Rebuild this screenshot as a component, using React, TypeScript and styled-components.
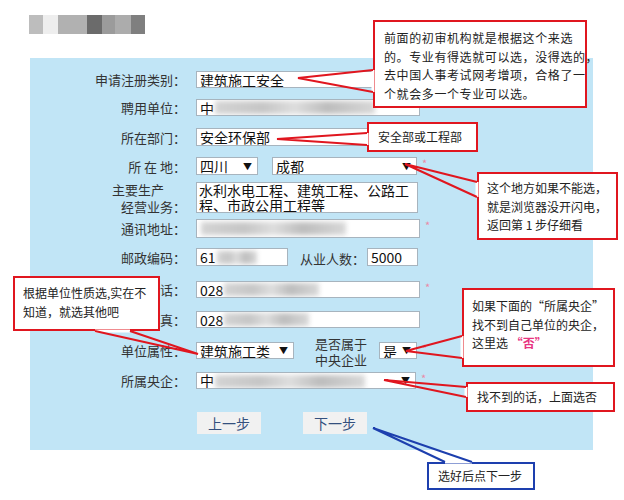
import styled, { createGlobalStyle } from "styled-components";

const GlobalStyle = createGlobalStyle`
  html, body {
    margin: 0;
    padding: 0;
    background: #fff;
  }
  body {
    font-family: "Noto Sans CJK SC", "Noto Sans", sans-serif;
  }
`;

const Page = styled.div`
  position: relative;
  width: 624px;
  height: 500px;
  overflow: hidden;
`;

const Header = styled.div`
  height: 58px;
  padding-left: 29px;
  display: flex;
  align-items: flex-start;
`;

const Mosaic = styled.div`
  display: flex;
  margin-top: 15px;
  height: 19px;
  filter: blur(0.5px);
`;

const Tile = styled.span<{ $w: number; $c: string }>`
  width: ${(p) => p.$w}px;
  background: ${(p) => p.$c};
`;

const Panel = styled.div`
  margin-left: 30px;
  width: 563px;
  height: 392px;
  box-sizing: border-box;
  background: #c1e5f6;
  padding-top: 13px;
`;

const Row = styled.div<{ $gap?: number; $h?: number }>`
  display: flex;
  align-items: center;
  margin-top: ${(p) => p.$gap ?? 0}px;
  height: ${(p) => p.$h ?? 17}px;
`;

const Label = styled.div`
  width: 156px;
  margin-right: 10px;
  flex-shrink: 0;
  text-align: right;
  font-size: 13px;
  line-height: 17px;
  color: #333;
  white-space: nowrap;
`;

const LabelLine = styled.span<{ $pr?: number }>`
  display: block;
  padding-right: ${(p) => p.$pr ?? 0}px;
`;

const SideLabel = styled.div<{ $ml: number; $mr: number }>`
  margin-left: ${(p) => p.$ml}px;
  margin-right: ${(p) => p.$mr}px;
  margin-top: 3px;
  font-size: 13px;
  line-height: 16px;
  color: #333;
  white-space: nowrap;
`;

const Field = styled.div<{ $w: number; $h?: number; $wrap?: boolean }>`
  width: ${(p) => p.$w}px;
  height: ${(p) => p.$h ?? 17}px;
  box-sizing: border-box;
  flex-shrink: 0;
  background: #fff;
  border: 1px solid #a7b4be;
  display: flex;
  align-items: ${(p) => (p.$wrap ? "flex-start" : "center")};
  padding: ${(p) => (p.$wrap ? "0 2px" : "0 3px")};
  font-size: 14px;
  line-height: ${(p) => (p.$wrap ? "14.5px" : "1")};
  color: #111;
  overflow: hidden;
  white-space: ${(p) => (p.$wrap ? "normal" : "nowrap")};
`;

const SelectBox = styled(Field)`
  justify-content: space-between;
`;

const Arrow = styled.span`
  font-size: 9px;
  color: #111;
  margin-right: 2px;
`;

const Smudge = styled.span<{ $w: number }>`
  display: inline-block;
  vertical-align: middle;
  width: ${(p) => p.$w}px;
  height: 13px;
  margin-left: 1px;
  background: linear-gradient(
    90deg,
    #d4d4d4,
    #c6c6c6 30%,
    #dedede 50%,
    #bdbdbd 70%,
    #d8d8d8
  );
  filter: blur(2.5px);
`;

const Star = styled.span<{ $ml?: number }>`
  margin-left: ${(p) => p.$ml ?? 5}px;
  align-self: flex-start;
  font-size: 11px;
  line-height: 12px;
  color: #e98aa8;
`;

const Buttons = styled.div`
  display: flex;
  margin-top: 23px;
  padding-left: 167px;
  gap: 42px;
`;

const StepButton = styled.button`
  width: 64px;
  height: 22px;
  border: none;
  background: #f1f1f1;
  font-family: "Noto Sans CJK SC", sans-serif;
  font-size: 14px;
  color: #34507e;
  padding: 0;
`;

const Callout = styled.div<{
  $x: number;
  $y: number;
  $w: number;
  $h: number;
  $blue?: boolean;
  $pad?: string;
}>`
  position: absolute;
  left: ${(p) => p.$x}px;
  top: ${(p) => p.$y}px;
  width: ${(p) => p.$w}px;
  height: ${(p) => p.$h}px;
  box-sizing: border-box;
  border: 2px solid ${(p) => (p.$blue ? "#1d3fae" : "#e0161f")};
  background: #fff;
  padding: ${(p) => p.$pad ?? "6px 0 0 9px"};
  font-size: 12px;
  line-height: 18.5px;
  color: #222;
  white-space: nowrap;
`;

const Wide = styled.span`
  letter-spacing: 0.6px;
`;

const Pink = styled.b`
  color: #e8357f;
`;

const Pointers = styled.svg`
  position: absolute;
  left: 0;
  top: 0;
  pointer-events: none;
`;

type Pt = [number, number];
const RED = "#e0161f";
const BLUE = "#1d3fae";

const pointers: { c: string; a: Pt; b: Pt; t: Pt }[] = [
  { c: RED, a: [373, 70], b: [373, 92], t: [298, 78] },
  { c: RED, a: [367, 133], b: [367, 145], t: [277, 139] },
  { c: RED, a: [477, 182], b: [477, 197], t: [405, 164] },
  { c: RED, a: [95, 331], b: [130, 331], t: [198, 354] },
  { c: RED, a: [462, 336], b: [462, 358], t: [406, 351] },
  { c: RED, a: [466, 387], b: [466, 397], t: [384, 380] },
  { c: BLUE, a: [445, 462], b: [472, 462], t: [373, 428] },
];

const tiles: [number, string][] = [
  [14, "#bdbdbd"],
  [15, "#eeeeee"],
  [29, "#b1b1b1"],
  [15, "#6b6b6b"],
  [13, "#9b9b9b"],
  [16, "#acacac"],
  [14, "#7f7f7f"],
];

export default function App() {
  return (
    <Page>
      <GlobalStyle />
      <Header>
        <Mosaic>
          {tiles.map(([w, c], i) => (
            <Tile key={i} $w={w} $c={c} />
          ))}
        </Mosaic>
      </Header>

      <Panel>
        <Row>
          <Label>申请注册类别：</Label>
          <Field $w={224}>建筑施工安全</Field>
        </Row>
        <Row $gap={11}>
          <Label>聘用单位：</Label>
          <Field $w={224}>
            中<Smudge $w={160} />
          </Field>
        </Row>
        <Row $gap={12} $h={18}>
          <Label>所在部门：</Label>
          <Field $w={224} $h={18}>
            安全环保部
          </Field>
        </Row>
        <Row $gap={11} $h={18}>
          <Label>所 在 地：</Label>
          <SelectBox $w={62} $h={18}>
            四川<Arrow>▼</Arrow>
          </SelectBox>
          <SelectBox $w={145} $h={18} style={{ marginLeft: 14 }}>
            成都<Arrow>▼</Arrow>
          </SelectBox>
          <Star>*</Star>
        </Row>
        <Row $gap={7} $h={31}>
          <Label>
            <LabelLine $pr={22}>主要生产</LabelLine>
            <LabelLine>经营业务：</LabelLine>
          </Label>
          <Field $w={222} $h={31} $wrap>
            水利水电工程、建筑工程、公路工程、市政公用工程等
          </Field>
        </Row>
        <Row $gap={6} $h={19}>
          <Label>通讯地址：</Label>
          <Field $w={224} $h={19}>
            <Smudge $w={145} />
          </Field>
          <Star>*</Star>
        </Row>
        <Row $gap={10} $h={18}>
          <Label>邮政编码：</Label>
          <Field $w={92} $h={18}>
            61<Smudge $w={40} />
          </Field>
          <SideLabel $ml={12} $mr={2}>
            从业人数：
          </SideLabel>
          <Field $w={51} $h={18}>
            5000
          </Field>
        </Row>
        <Row $gap={15}>
          <Label>电话：</Label>
          <Field $w={224}>
            028<Smudge $w={95} />
          </Field>
          <Star>*</Star>
        </Row>
        <Row $gap={13}>
          <Label>传真：</Label>
          <Field $w={224}>
            028<Smudge $w={85} />
          </Field>
        </Row>
        <Row $gap={14}>
          <Label>单位属性：</Label>
          <SelectBox $w={98}>
            建筑施工类<Arrow>▼</Arrow>
          </SelectBox>
          <SideLabel $ml={21} $mr={12}>
            <LabelLine>是否属于</LabelLine>
            <LabelLine>中央企业</LabelLine>
          </SideLabel>
          <SelectBox $w={38}>
            是<Arrow>▼</Arrow>
          </SelectBox>
          <Star>*</Star>
        </Row>
        <Row $gap={13}>
          <Label>所属央企：</Label>
          <SelectBox $w={220}>
            <span>
              中<Smudge $w={150} />
            </span>
            <Arrow>▼</Arrow>
          </SelectBox>
          <Star>*</Star>
        </Row>
        <Buttons>
          <StepButton>上一步</StepButton>
          <StepButton>下一步</StepButton>
        </Buttons>
      </Panel>

      <Callout $x={373} $y={20} $w={214} $h={88} $pad="7px 0 0 9px">
        <Wide>前面的初审机构就是根据这个来选</Wide>
        <br />
        <Wide>的。专业有得选就可以选，没得选的，</Wide>
        <br />
        <Wide>去中国人事考试网考增项，合格了一</Wide>
        <br />
        <Wide>个就会多一个专业可以选。</Wide>
      </Callout>
      <Callout $x={367} $y={122} $w={111} $h={30} $pad="4px 0 0 9px">
        安全部或工程部
      </Callout>
      <Callout $x={477} $y={172} $w={141} $h={68} $pad="5px 0 0 8px">
        这个地方如果不能选，
        <br />
        就是浏览器没开闪电，
        <br />
        返回第 1 步仔细看
      </Callout>
      <Callout $x={13} $y={276} $w={147} $h={55} $pad="6px 0 0 8px">
        根据单位性质选,实在不
        <br />
        知道，就选其他吧
      </Callout>
      <Callout $x={462} $y={288} $w={153} $h={79} $pad="7px 0 0 8px">
        如果下面的“所属央企”
        <br />
        找不到自己单位的央企，
        <br />
        这里选 <Pink>“否”</Pink>
      </Callout>
      <Callout $x={466} $y={382} $w={149} $h={30} $pad="4px 0 0 9px">
        找不到的话，上面选否
      </Callout>
      <Callout $x={427} $y={462} $w={108} $h={28} $blue $pad="3px 0 0 9px">
        选好后点下一步
      </Callout>

      <Pointers width={624} height={500} viewBox="0 0 624 500">
        {pointers.map((p, i) => (
          <g key={i}>
            <line
              x1={p.a[0]}
              y1={p.a[1]}
              x2={p.b[0]}
              y2={p.b[1]}
              stroke="#fff"
              strokeWidth={3}
            />
            <polyline
              points={`${p.a.join(",")} ${p.t.join(",")} ${p.b.join(",")}`}
              fill="none"
              stroke={p.c}
              strokeWidth={2}
              strokeLinejoin="miter"
            />
          </g>
        ))}
      </Pointers>
    </Page>
  );
}
